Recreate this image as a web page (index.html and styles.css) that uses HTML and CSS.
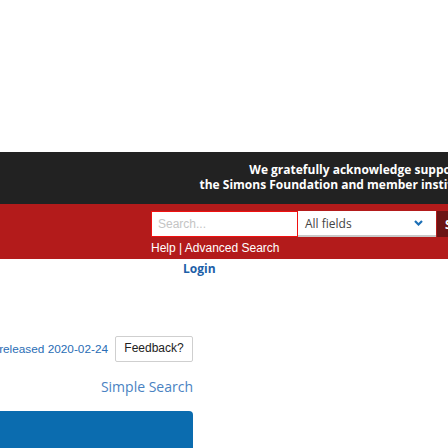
FILE: index.html
```html
<!DOCTYPE html>
<html>
<head>
<meta charset="utf-8">
<link rel="stylesheet" href="styles.css">
</head>
<body>
<div class="top-space"></div>
<div class="ack">
  <div class="ack-text">
    <div>We gratefully acknowledge support from</div>
    <div>the Simons Foundation and member institutions.</div>
  </div>
</div>
<div class="searchbar">
  <form class="search-row">
    <input class="search-input" type="text" placeholder="Search...">
    <div class="search-select">
      <span>All fields</span>
      <svg class="chev" width="9" height="6" viewBox="0 0 9 6"><path d="M1 1 L4.5 4.5 L8 1" fill="none" stroke="#1c6fb6" stroke-width="2.2"/></svg>
    </div>
    <button class="search-btn" type="button">SEARCH</button>
  </form>
  <div class="help">Help | Advanced Search</div>
</div>
<div class="login">Login</div>
<div class="foot">
  <div class="foot-row">
    <span class="released">released 2020-02-24</span>
    <span class="feedback">Feedback?</span>
  </div>
  <div class="simple">Simple Search</div>
  <div class="bluebar"></div>
</div>
</body>
</html>
```
FILE: styles.css
```css
html, body {
  margin: 0;
  padding: 0;
  background: #fff;
  overflow: hidden;
  width: 448px;
  height: 448px;
}
.top-space {
  height: 152px;
}
.ack {
  height: 52px;
  background: #222222;
  overflow: hidden;
  box-sizing: border-box;
  padding-top: 10px;
}
.ack-text {
  width: 494px;
  text-align: right;
  white-space: nowrap;
  font-family: "Open Sans", sans-serif;
  font-weight: 700;
  font-size: 12px;
  line-height: 15px;
  color: #fff;
}
.searchbar {
  height: 55px;
  box-sizing: border-box;
  background: #b31b1b;
  padding: 7px 0 0 151px;
  overflow: hidden;
}
.search-row {
  display: flex;
  height: 26px;
  margin: 0;
  width: 400px;
}
.search-input {
  box-sizing: border-box;
  width: 147px;
  height: 26px;
  margin: 0;
  border: 1px solid #f01010;
  background: #fff;
  padding: 0 6px;
  font-family: "Liberation Sans", Arial, sans-serif;
  font-size: 12px;
  outline: none;
}
.search-input::placeholder {
  color: #c4c4c4;
}
.search-select {
  box-sizing: border-box;
  width: 138px;
  height: 26px;
  background: #fff;
  border-bottom: 2px solid #c9c9c9;
  display: flex;
  align-items: center;
  justify-content: space-between;
  padding: 0 13px 0 7px;
  font-family: "Open Sans", sans-serif;
  font-size: 12px;
  color: #444;
}
.chev {
  display: block;
}
.search-btn {
  margin-left: 1px;
  height: 26px;
  border: none;
  background: #6c1414;
  color: #fff;
  font-family: "Open Sans", sans-serif;
  font-weight: 700;
  font-size: 12px;
  padding: 0 8px;
  text-align: left;
  width: 80px;
}
.help {
  margin-top: 4px;
  font-family: "Liberation Sans", Arial, sans-serif;
  font-size: 12px;
  line-height: 14px;
  color: #fff;
}
.login {
  margin: 2px 0 0 183px;
  font-family: "Open Sans", sans-serif;
  font-weight: 700;
  font-size: 12px;
  line-height: 16px;
  color: #1d5fa8;
}
.foot {
  width: 193px;
  margin-top: 59px;
  display: flex;
  flex-direction: column;
  align-items: flex-end;
}
.foot-row {
  display: flex;
  align-items: center;
  justify-content: flex-end;
  gap: 7px;
  height: 26px;
  white-space: nowrap;
}
.released {
  font-family: "Liberation Sans", Arial, sans-serif;
  font-size: 11.8px;
  color: #2a6db5;
}
.feedback {
  box-sizing: border-box;
  width: 78px;
  height: 26px;
  border: 1px solid #cfcfcf;
  border-radius: 2px;
  display: flex;
  align-items: center;
  justify-content: center;
  font-family: "Liberation Sans", Arial, sans-serif;
  font-size: 12px;
  color: #222;
  padding-bottom: 3px;
}
.simple {
  margin-top: 15px;
  font-family: "Open Sans", sans-serif;
  font-size: 14px;
  line-height: 20px;
  color: #4a82c2;
}
.bluebar {
  margin-top: 14px;
  width: 193px;
  height: 40px;
  background: #0b6caf;
  border-top-right-radius: 4px;
}
```
